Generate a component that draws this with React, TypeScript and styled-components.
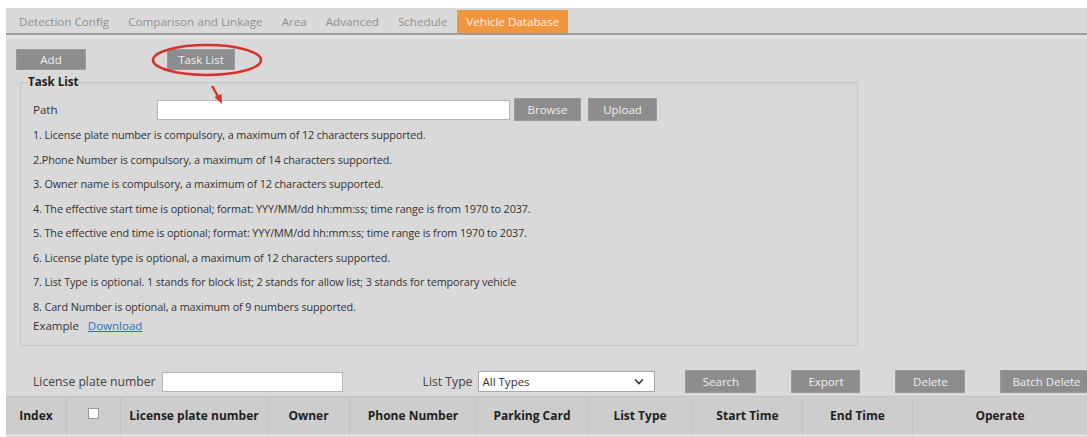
import styled, { createGlobalStyle } from 'styled-components';

const GlobalStyle = createGlobalStyle`
  html, body {
    margin: 0;
    padding: 0;
    background: #ffffff;
  }
  body {
    font-family: "Open Sans", "Liberation Sans", sans-serif;
    color: #333;
  }
`;

const tabs = [
  'Detection Config',
  'Comparison and Linkage',
  'Area',
  'Advanced',
  'Schedule',
  'Vehicle Database',
];

const notes = [
  '1. License plate number is compulsory, a maximum of 12 characters supported.',
  '2.Phone Number is compulsory, a maximum of 14 characters supported.',
  '3. Owner name is compulsory, a maximum of 12 characters supported.',
  '4. The effective start time is optional; format: YYY/MM/dd hh:mm:ss; time range is from 1970 to 2037.',
  '5. The effective end time is optional; format: YYY/MM/dd hh:mm:ss; time range is from 1970 to 2037.',
  '6. License plate type is optional, a maximum of 12 characters supported.',
  '7. List Type is optional. 1 stands for block list; 2 stands for allow list; 3 stands for temporary vehicle',
  '8. Card Number is optional, a maximum of 9 numbers supported.',
];

const columns: { label: string; width: number; check?: boolean }[] = [
  { label: 'Index', width: 61 },
  { label: '', width: 54, check: true },
  { label: 'License plate number', width: 147 },
  { label: 'Owner', width: 82 },
  { label: 'Phone Number', width: 127 },
  { label: 'Parking Card', width: 111 },
  { label: 'List Type', width: 105 },
  { label: 'Start Time', width: 110 },
  { label: 'End Time', width: 110 },
  { label: 'Operate', width: 174 },
];

export default function App() {
  return (
    <>
      <GlobalStyle />
      <Page>
        <Panel>
          <TabBar>
            {tabs.map((t) => (
              <Tab key={t} $active={t === 'Vehicle Database'}>
                {t}
              </Tab>
            ))}
          </TabBar>
          <TabRule />

          <Toolbar>
            <GrayButton $w={70}>Add</GrayButton>
            <GrayButton $w={68}>Task List</GrayButton>
          </Toolbar>

          <TaskFieldset>
            <Legend>Task List</Legend>
            <PathRow>
              <PathLabel>Path</PathLabel>
              <PathInput />
              <GrayButton $w={67} $h={23}>
                Browse
              </GrayButton>
              <GrayButton $w={69} $h={23}>
                Upload
              </GrayButton>
            </PathRow>
            <NoteList>
              {notes.map((n) => (
                <Note key={n}>{n}</Note>
              ))}
            </NoteList>
            <ExampleRow>
              Example <DownloadLink>Download</DownloadLink>
            </ExampleRow>
          </TaskFieldset>

          <SearchRow>
            <FieldLabel>License plate number</FieldLabel>
            <PlateInput />
            <ListTypeGroup>
              <FieldLabel>List Type</FieldLabel>
              <FakeSelect>
                <span>All Types</span>
                <svg width="10" height="7" viewBox="0 0 10 7">
                  <path d="M1 1.5 L5 5.5 L9 1.5" fill="none" stroke="#333" strokeWidth="1.6" />
                </svg>
              </FakeSelect>
            </ListTypeGroup>
            <ActionButtons>
              <GrayButton $w={71} $h={23}>Search</GrayButton>
              <GrayButton $w={69} $h={23}>Export</GrayButton>
              <GrayButton $w={70} $h={23}>Delete</GrayButton>
              <GrayButton $w={92} $h={23}>Batch Delete</GrayButton>
            </ActionButtons>
          </SearchRow>

          <HeaderRow>
            {columns.map((c, i) => (
              <HeadCell key={i} $w={c.width}>
                {c.check ? <CheckBox /> : c.label}
              </HeadCell>
            ))}
          </HeaderRow>
          <EmptyRow />
        </Panel>

        <Annotation width="1087" height="437" viewBox="0 0 1087 437">
          <ellipse cx="207" cy="60" rx="54" ry="15" fill="none" stroke="#d8322f" strokeWidth="2.6" />
          <line x1="212" y1="86" x2="219" y2="98" stroke="#d8322f" strokeWidth="2.4" />
          <path d="M214.5 97 L222 104 L221.5 94 Z" fill="#d8322f" />
        </Annotation>
      </Page>
    </>
  );
}

const Page = styled.div`
  position: relative;
  width: 1087px;
  height: 437px;
  padding: 8px 0 0 6px;
  box-sizing: border-box;
  overflow: hidden;
`;

const Panel = styled.div`
  width: 1081px;
  height: 429px;
  background: #d9d9d9;
  display: flex;
  flex-direction: column;
`;

const TabBar = styled.div`
  height: 25px;
  display: flex;
  align-items: stretch;
  padding-left: 4px;
  border-bottom: 2px solid #9e9e9e;
  background: #dadada;
`;

const Tab = styled.div<{ $active?: boolean }>`
  display: flex;
  align-items: center;
  padding: 0 9px;
  margin-right: ${(p) => (p.$active ? '0' : '1px')};
  margin-top: 2px;
  font-size: 11.65px;
  color: ${(p) => (p.$active ? '#fff3e6' : '#8f8f8f')};
  background: ${(p) => (p.$active ? '#f0963f' : 'transparent')};
`;

const TabRule = styled.div`
  height: 4px;
  background: #e2e2e2;
`;

const Toolbar = styled.div`
  display: flex;
  gap: 81px;
  padding: 10px 0 0 10px;
  height: 21px;
`;

const GrayButton = styled.div<{ $w: number; $h?: number }>`
  width: ${(p) => p.$w}px;
  height: ${(p) => p.$h ?? 21}px;
  flex: none;
  background: #8d8d8d;
  color: #eeeeee;
  font-size: 11.5px;
  display: flex;
  align-items: center;
  justify-content: center;
  box-sizing: border-box;
  border: 1px solid #9a9a9a;
`;

const TaskFieldset = styled.fieldset`
  margin: 6px 0 0 14px;
  width: 838px;
  height: 270px;
  box-sizing: border-box;
  border: 1px solid #c6c6c6;
  border-top-color: #c2c2c2;
  padding: 0 0 0 12px;
  position: relative;
`;

const Legend = styled.legend`
  font-size: 11.6px;
  font-weight: 700;
  color: #222;
  padding: 0;
  margin-left: -5px;
  line-height: 12px;
`;

const PathRow = styled.div`
  display: flex;
  align-items: center;
  margin-top: 10px;
  gap: 4px;
  height: 23px;

  & > :last-child {
    margin-left: 3px;
  }
`;

const PathLabel = styled.div`
  width: 120px;
  font-size: 11.5px;
  color: #333;
`;

const PathInput = styled.div`
  width: 353px;
  height: 20px;
  flex: none;
  background: #ffffff;
  border: 1px solid #b5b5b5;
  box-sizing: border-box;
`;

const NoteList = styled.div`
  display: flex;
  flex-direction: column;
  margin-top: 2px;
`;

const Note = styled.div`
  font-size: 10.8px;
  line-height: 24.5px;
  color: #333;
  white-space: nowrap;
  letter-spacing: -0.1px;
`;

const ExampleRow = styled.div`
  font-size: 11.5px;
  color: #333;
  line-height: 14px;
`;

const DownloadLink = styled.span`
  margin-left: 6px;
  color: #2d6fc8;
  text-decoration: underline;
`;

const SearchRow = styled.div`
  display: flex;
  align-items: center;
  margin-top: 24px;
  height: 23px;
  padding-left: 27px;
`;

const FieldLabel = styled.div`
  font-size: 12.2px;
  color: #444;
  margin-right: 6px;
  white-space: nowrap;
  flex: none;
`;

const PlateInput = styled.div`
  width: 181px;
  height: 20px;
  flex: none;
  background: #ffffff;
  border: 1px solid #b5b5b5;
  box-sizing: border-box;
`;

const ListTypeGroup = styled.div`
  display: flex;
  align-items: center;
  flex: none;
  margin-left: 80px;
`;

const FakeSelect = styled.div`
  width: 177px;
  height: 21px;
  flex: none;
  background: #ffffff;
  border: 1px solid #a8a8a8;
  box-sizing: border-box;
  display: flex;
  align-items: center;
  justify-content: space-between;
  padding: 0 10px 0 3px;
  font-size: 11.5px;
  color: #333;
`;

const ActionButtons = styled.div`
  display: flex;
  flex: none;
  gap: 35px;
  margin-left: 30px;
`;

const HeaderRow = styled.div`
  display: flex;
  margin-top: 3px;
  height: 37px;
  background: #cdcdcd;
  border-top: 1px solid #c4c4c4;
`;

const HeadCell = styled.div<{ $w: number }>`
  width: ${(p) => p.$w}px;
  flex: none;
  display: flex;
  align-items: center;
  justify-content: center;
  font-size: 12px;
  font-weight: 700;
  color: #222;
  border-right: 1px solid #c2c2c2;
  box-sizing: border-box;

  &:last-child {
    border-right: none;
  }
`;

const CheckBox = styled.div`
  width: 9px;
  height: 9px;
  background: #ffffff;
  border: 1px solid #999;
  margin-top: -4px;
`;

const EmptyRow = styled.div`
  flex: 1;
  background: #dedede;
`;

const Annotation = styled.svg`
  position: absolute;
  left: 0;
  top: 0;
  pointer-events: none;
`;
